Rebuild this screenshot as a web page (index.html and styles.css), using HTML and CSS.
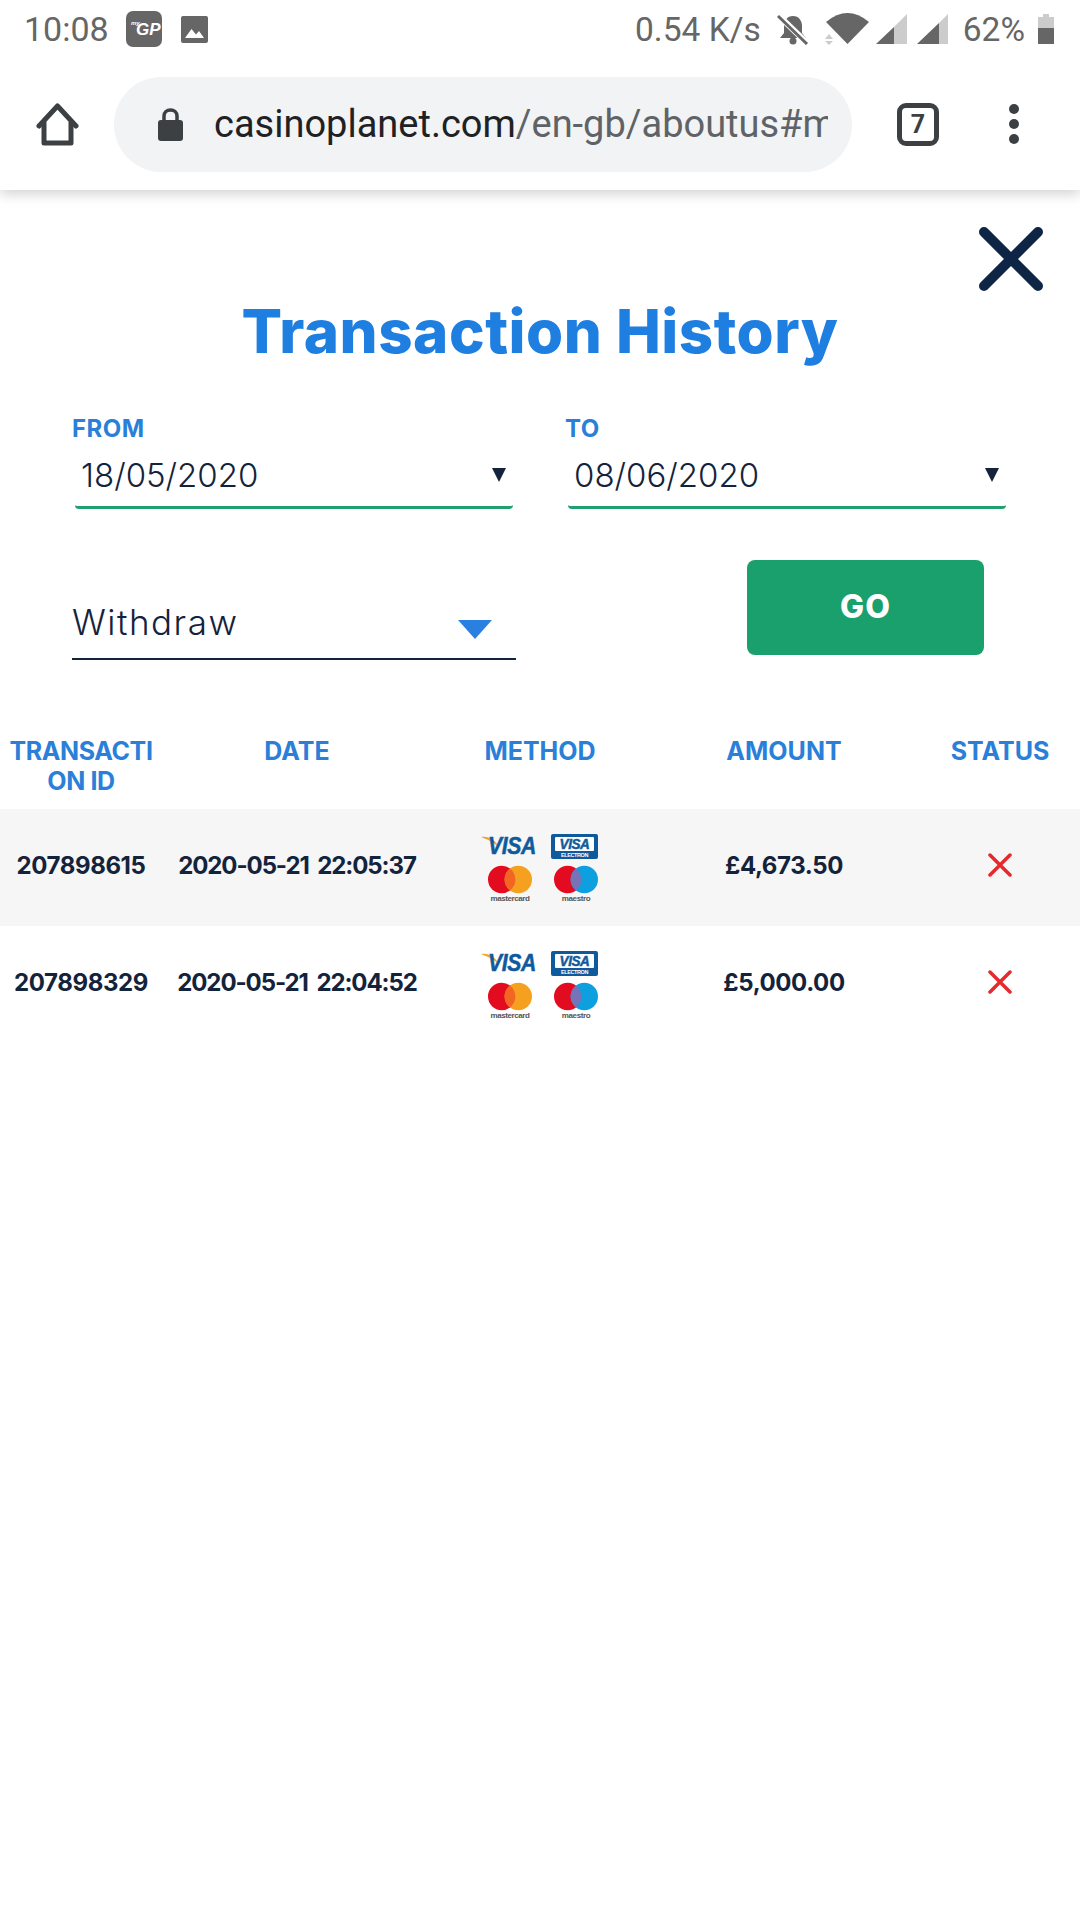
FILE: index.html
```html
<!DOCTYPE html>
<html lang="en">

<head>
    <meta charset="UTF-8">
    <meta name="viewport" content="width=device-width, initial-scale=1.0">
    <title>Transaction History</title>
    <link rel="stylesheet" href="styles.css">
</head>

<body>

    <div class="statusbar">
        <span class="time">10:08</span>
        <svg class="ic-gp" width="36" height="36" viewBox="0 0 36 36">
            <rect width="36" height="36" rx="7" fill="#666" />
            <text x="5" y="14" class="gp-my" font-size="6">my</text>
            <text x="10" y="24" class="gp-text" font-size="17">GP</text>
        </svg>
        <svg class="ic-image" width="27" height="27" viewBox="0 0 27 27">
            <rect width="27" height="27" rx="2" fill="#666" />
            <path d="M4 22 L10.5 13 L15 18.5 L18 15 L23 22Z" fill="#fff" />
        </svg>
        <span class="speed">0.54 K/s</span>
        <svg class="ic-bell" width="32" height="31" viewBox="0 0 32 31">
            <path d="M16 2 C10 2 7 7 7 12 V19 L3 24 H29 L25 19 V12 C25 7 22 2 16 2Z" fill="#666" />
            <circle cx="16" cy="27" r="3.5" fill="#666" />
            <path d="M1 1 L31 30" stroke="#fff" stroke-width="6" />
            <path d="M1 2 L30 30" stroke="#666" stroke-width="3" />
        </svg>
        <svg class="ic-wifi" width="44" height="32" viewBox="0 0 44 32">
            <path d="M1 9 Q22.5 -9 44 9 L22.5 31Z" fill="#666" />
            <path d="M0 26 L4 21 L8 26Z M0 28 H8 L4 32Z" fill="#ccc" />
        </svg>
        <svg class="ic-signal" width="31" height="30" viewBox="0 0 31 30">
            <path d="M31 0 V30 H18 V13Z" fill="#ccc" />
            <path d="M18 13 V30 H0Z" fill="#666" />
        </svg>
        <svg class="ic-signal second" width="31" height="30" viewBox="0 0 31 30">
            <path d="M31 0 V30 H22 V9Z" fill="#ccc" />
            <path d="M22 9 V30 H0Z" fill="#666" />
        </svg>
        <span class="battery-text">62%</span>
        <svg class="ic-battery" width="16" height="30" viewBox="0 0 16 30">
            <path d="M5 0 H11 V3 H16 V14 H0 V3 H5Z" fill="#ccc" />
            <rect y="14" width="16" height="16" fill="#666" />
        </svg>
    </div>

    <div class="toolbar">
        <svg class="ic-home" width="43" height="44" viewBox="0 0 43 44">
            <path d="M3 24 L21.5 4 L40 24" fill="none" stroke="#3c4043" stroke-width="5" stroke-linecap="round" stroke-linejoin="round" />
            <path d="M8 20 V41 H35 V20" fill="none" stroke="#3c4043" stroke-width="5" stroke-linejoin="round" />
        </svg>
        <div class="urlbar">
            <svg class="ic-lock" width="25" height="33" viewBox="0 0 25 33">
                <path d="M6 14 V8 C6 4 9 2 12.5 2 C16 2 19 4 19 8 V14" fill="none" stroke="#3c4043" stroke-width="3.5" />
                <rect y="12" width="25" height="21" rx="3" fill="#3c4043" />
            </svg>
            <div class="url"><span class="host">casinoplanet.com</span>/en-gb/aboutus#m</div>
        </div>
        <div class="tabs">7</div>
        <div class="menu"><i></i><i></i><i></i></div>
    </div>

    <div class="page">
        <svg class="close" width="64" height="64" viewBox="0 0 64 64">
            <path d="M5 5 L59 59 M59 5 L5 59" stroke="#0f2545" stroke-width="10" stroke-linecap="round" />
        </svg>

        <h1 class="title">Transaction History</h1>

        <div class="dates">
            <div class="datefield">
                <label>FROM</label>
                <div class="dateinput"><span>18/05/2020</span><i class="arrow"></i></div>
            </div>
            <div class="datefield">
                <label>TO</label>
                <div class="dateinput"><span>08/06/2020</span><i class="arrow"></i></div>
            </div>
        </div>

        <div class="filter">
            <div class="select"><span>Withdraw</span><i class="arrow-blue"></i></div>
            <button class="go">GO</button>
        </div>

        <div class="table">
            <div class="row head">
                <div class="wrapcol">TRANSACTI<br>ON ID</div>
                <div>DATE</div>
                <div>METHOD</div>
                <div>AMOUNT</div>
                <div>STATUS</div>
            </div>
            <div class="row item odd">
                <div>207898615</div>
                <div class="when">2020-05-21 22:05:37</div>
                <div>
                    <svg class="cards" width="120" height="72" viewBox="0 0 120 72">
                        <path d="M1 5 C9 4 15 7 19 16 C15 11 9 8 1 5Z" fill="#f0a32c" />
                        <text x="8" y="22" class="visa" font-size="24" textLength="48" lengthAdjust="spacingAndGlyphs">VISA</text>
                        <rect x="71" y="2" width="47" height="25" rx="2" fill="#0f5a9c" />
                        <rect x="75" y="5" width="39" height="14" rx="1" fill="#fff" />
                        <text x="94.5" y="17" text-anchor="middle" class="visa" font-size="14" textLength="30" lengthAdjust="spacingAndGlyphs">VISA</text>
                        <text x="94.5" y="25" text-anchor="middle" class="electron" font-size="5.5">ELECTRON</text>
                        <circle cx="21.7" cy="47.5" r="13.7" fill="#e30b20" />
                        <circle cx="38.3" cy="47.5" r="13.7" fill="#f6a01f" />
                        <path d="M30 36.6 A13.7 13.7 0 0 1 30 58.4 A13.7 13.7 0 0 1 30 36.6Z" fill="#f26522" />
                        <text x="30" y="69" text-anchor="middle" class="cardname" font-size="8">mastercard</text>
                        <circle cx="87.7" cy="47.5" r="13.7" fill="#e30b20" />
                        <circle cx="104.3" cy="47.5" r="13.7" fill="#0e9fdf" />
                        <path d="M96 36.6 A13.7 13.7 0 0 1 96 58.4 A13.7 13.7 0 0 1 96 36.6Z" fill="#7673b8" />
                        <text x="96" y="69" text-anchor="middle" class="cardname" font-size="8">maestro</text>
                    </svg>
                </div>
                <div>£4,673.50</div>
                <div><svg width="24" height="24" viewBox="0 0 24 24"><path d="M2 2 L22 22 M22 2 L2 22" stroke="#e52a2e" stroke-width="3.5" stroke-linecap="round" /></svg></div>
            </div>
            <div class="row item">
                <div>207898329</div>
                <div class="when">2020-05-21 22:04:52</div>
                <div>
                    <svg class="cards" width="120" height="72" viewBox="0 0 120 72">
                        <path d="M1 5 C9 4 15 7 19 16 C15 11 9 8 1 5Z" fill="#f0a32c" />
                        <text x="8" y="22" class="visa" font-size="24" textLength="48" lengthAdjust="spacingAndGlyphs">VISA</text>
                        <rect x="71" y="2" width="47" height="25" rx="2" fill="#0f5a9c" />
                        <rect x="75" y="5" width="39" height="14" rx="1" fill="#fff" />
                        <text x="94.5" y="17" text-anchor="middle" class="visa" font-size="14" textLength="30" lengthAdjust="spacingAndGlyphs">VISA</text>
                        <text x="94.5" y="25" text-anchor="middle" class="electron" font-size="5.5">ELECTRON</text>
                        <circle cx="21.7" cy="47.5" r="13.7" fill="#e30b20" />
                        <circle cx="38.3" cy="47.5" r="13.7" fill="#f6a01f" />
                        <path d="M30 36.6 A13.7 13.7 0 0 1 30 58.4 A13.7 13.7 0 0 1 30 36.6Z" fill="#f26522" />
                        <text x="30" y="69" text-anchor="middle" class="cardname" font-size="8">mastercard</text>
                        <circle cx="87.7" cy="47.5" r="13.7" fill="#e30b20" />
                        <circle cx="104.3" cy="47.5" r="13.7" fill="#0e9fdf" />
                        <path d="M96 36.6 A13.7 13.7 0 0 1 96 58.4 A13.7 13.7 0 0 1 96 36.6Z" fill="#7673b8" />
                        <text x="96" y="69" text-anchor="middle" class="cardname" font-size="8">maestro</text>
                    </svg>
                </div>
                <div>£5,000.00</div>
                <div><svg width="24" height="24" viewBox="0 0 24 24"><path d="M2 2 L22 22 M22 2 L2 22" stroke="#e52a2e" stroke-width="3.5" stroke-linecap="round" /></svg></div>
            </div>
        </div>
    </div>

</body>

</html>
```

FILE: styles.css
```css
* {
    margin: 0;
    padding: 0;
    box-sizing: border-box;
}

body {
    width: 1080px;
    height: 1920px;
    background-color: #fff;
    font-family: Inter, "Liberation Sans", sans-serif;
    color: #14233c;
    overflow: hidden;
}

.visa {
    font-family: "Liberation Sans", sans-serif;
    font-weight: 700;
    font-style: italic;
    fill: #0f5a9c;
    stroke: #0f5a9c;
    stroke-width: 0.5px;
}

.electron {
    font-family: "Liberation Sans", sans-serif;
    font-weight: 700;
    fill: #fff;
}

.cardname {
    font-family: "Liberation Sans", sans-serif;
    fill: #555;
}

/* status bar */
.statusbar {
    display: flex;
    align-items: center;
    position: relative;
    z-index: 1;
    height: 58px;
    padding-left: 24px;
    background-color: #fff;
    font-family: Roboto, sans-serif;
    font-size: 34px;
    color: #666;
}

.gp-my,
.gp-text {
    font-family: "Liberation Sans", sans-serif;
    font-weight: 700;
    font-style: italic;
    fill: #fff;
}

.ic-gp {
    margin-left: 17px;
}

.ic-image {
    margin-left: 19px;
}

.speed {
    margin-left: auto;
    font-size: 33.5px;
}

.ic-bell {
    margin-left: 16px;
}

.ic-wifi {
    margin-left: 16px;
}

.ic-signal {
    margin-left: 7px;
}

.ic-signal.second {
    margin-left: 10px;
}

.battery-text {
    margin-left: 15px;
    font-size: 33.5px;
}

.ic-battery {
    margin-left: 13px;
    margin-right: 26px;
}

/* browser toolbar */
.toolbar {
    display: flex;
    align-items: center;
    height: 132px;
    padding-left: 36px;
    box-shadow: 0 4px 12px rgba(0, 0, 0, 0.18);
}

.urlbar {
    display: flex;
    align-items: center;
    width: 738px;
    height: 95px;
    margin-left: 35px;
    padding-left: 44px;
    border-radius: 48px;
    background-color: #f1f3f4;
}

.url {
    width: 614px;
    margin-left: 31px;
    overflow: hidden;
    white-space: nowrap;
    font-family: Roboto, sans-serif;
    font-size: 38px;
    color: #5f6368;
}

.host {
    color: #202124;
}

.tabs {
    display: flex;
    align-items: center;
    justify-content: center;
    width: 42px;
    height: 43px;
    margin-left: 45px;
    border: 5px solid #3c4043;
    border-radius: 9px;
    font-family: Roboto, sans-serif;
    font-weight: 700;
    font-size: 25px;
    color: #3c4043;
}

.menu {
    display: flex;
    flex-direction: column;
    gap: 5px;
    margin-left: 70px;
}

.menu i {
    display: block;
    width: 10px;
    height: 10px;
    border-radius: 50%;
    background-color: #3c4043;
}

/* modal */
.page {
    position: relative;
}

.close {
    position: absolute;
    top: 37px;
    right: 37px;
}

.title {
    padding-top: 109px;
    text-align: center;
    font-size: 60px;
    line-height: 64px;
    font-weight: 800;
    letter-spacing: 0.5px;
    color: #1f7fe0;
}

.dates {
    display: flex;
    gap: 52px;
    margin-top: 51px;
    padding-left: 72px;
}

.datefield {
    width: 441px;
}

.datefield label {
    display: block;
    font-size: 24px;
    line-height: 30px;
    font-weight: 700;
    letter-spacing: 0.5px;
    color: #2a80d8;
}

.dateinput {
    display: flex;
    align-items: center;
    justify-content: space-between;
    height: 65px;
    margin-left: 3px;
    padding: 0 7px 0 6px;
    border-bottom: 3px solid #1fa06e;
    border-radius: 4px;
    font-size: 33px;
    font-weight: 300;
}

.arrow {
    width: 0;
    height: 0;
    border-left: 7px solid transparent;
    border-right: 7px solid transparent;
    border-top: 14px solid #14233c;
}

.filter {
    display: flex;
    align-items: flex-start;
    margin-top: 51px;
    padding-left: 72px;
}

.select {
    display: flex;
    align-items: center;
    justify-content: space-between;
    width: 444px;
    height: 100px;
    padding: 26px 24px 0 0;
    border-bottom: 2px solid #14233c;
    font-size: 35px;
    font-weight: 300;
    letter-spacing: 1.5px;
}

.arrow-blue {
    width: 0;
    height: 0;
    margin-top: 14px;
    border-left: 17px solid transparent;
    border-right: 17px solid transparent;
    border-top: 19px solid #2a80e0;
}

.go {
    width: 237px;
    height: 95px;
    margin-left: 231px;
    padding-bottom: 3px;
    border: none;
    border-radius: 8px;
    background-color: #1aa06d;
    font-family: Inter, sans-serif;
    font-weight: 800;
    font-size: 32px;
    letter-spacing: 1px;
    color: #fff;
}

.table {
    margin-top: 76px;
}

.row {
    display: grid;
    grid-template-columns: 162px 270px 216px 272px 160px;
    text-align: center;
}

.head {
    height: 73px;
    font-size: 25px;
    line-height: 30px;
    font-weight: 700;
    color: #2a80d8;
}

.wrapcol {
    letter-spacing: -0.4px;
}

.item {
    height: 117px;
    padding-bottom: 5px;
    align-items: center;
    font-size: 24px;
    font-weight: 700;
    letter-spacing: -0.4px;
}

.item .when {
    letter-spacing: -1.1px;
    word-spacing: 4px;
}

.item svg {
    display: block;
    margin: 0 auto;
}

.item .cards {
    margin-top: 5px;
}

.odd {
    background-color: #f6f6f6;
}
```
